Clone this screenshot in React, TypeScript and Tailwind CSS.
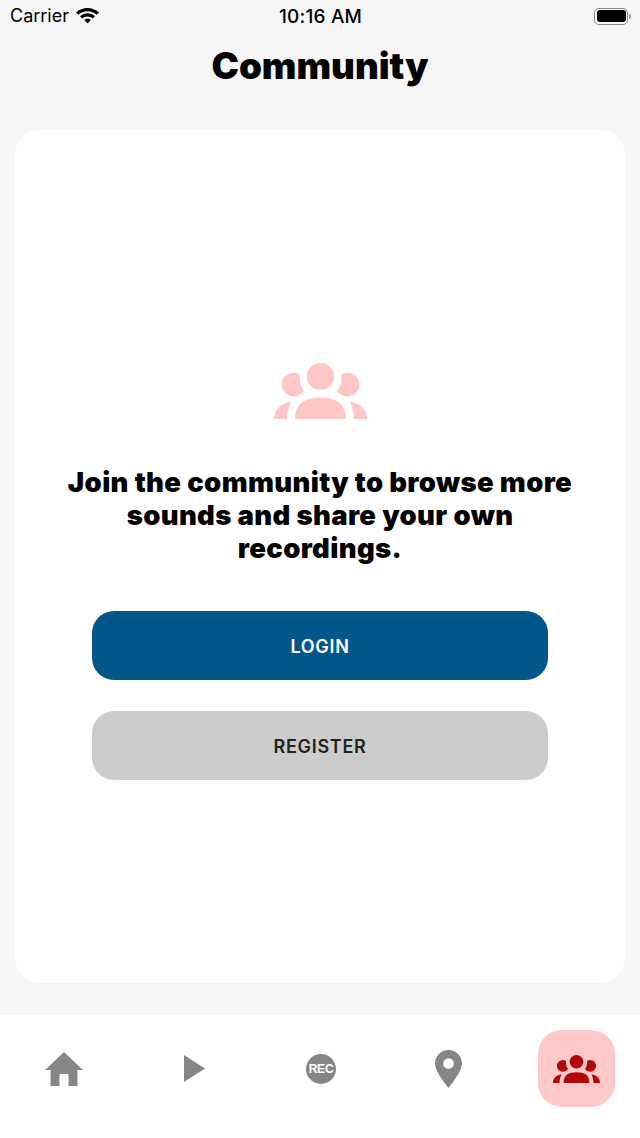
const Groups = ({ className, fill }: { className: string; fill: string }) => (
  <svg viewBox="69 37 279 171" preserveAspectRatio="none" className={className} fill={fill}>
    <mask id={"m" + fill.slice(1)}>
      <rect x="60" y="30" width="300" height="180" fill="#fff" />
      <circle cx="208.5" cy="84" r="63" fill="#000" />
    </mask>
    <circle cx="208.5" cy="78" r="41" />
    <g mask={"url(#m" + fill.slice(1) + ")"}>
      <circle cx="128" cy="103" r="36" />
      <circle cx="289" cy="103" r="36" />
    </g>
    <path d="M132 208C132 160 162 143 208.500 143C255 143 285 160 285 208Z" />
    <path d="M69 208C69 178 90 160 120 155C112 172 108 190 108 208Z" />
    <path d="M348 208C348 178 327 160 297 155C305 172 309 190 309 208Z" />
  </svg>
);

const NavItem = ({ children }: { children: React.ReactNode }) => (
  <div className="flex w-[77px] h-[77px] items-center justify-center">{children}</div>
);

export default function App() {
  return (
    <div className="flex h-[1138px] w-[640px] flex-col overflow-hidden bg-[#f6f6f6] font-['Inter',sans-serif] text-black">
      <div className="grid h-[32px] grid-cols-3 items-center pl-[10px] pr-[9px]">
        <div className="flex items-center gap-[7px]">
          <span className="text-[18px] leading-none">Carrier</span>
          <svg viewBox="0 0 24 18" className="h-[16px] w-[23px]" fill="#000" preserveAspectRatio="none">
            <path d="M12 0C7.500 0 3.500 1.800 0 5L2.400 7.600C5 5.100 8.300 3.700 12 3.700S19 5.100 21.600 7.600L24 5C20.500 1.800 16.500 0 12 0Z" />
            <path d="M12 6C9 6 6.300 7.200 4.200 9.200L6.600 11.700C8 10.400 9.900 9.600 12 9.600S16 10.400 17.400 11.700L19.800 9.200C17.700 7.200 15 6 12 6Z" />
            <path d="M12 12C10.700 12 9.500 12.500 8.600 13.400L12 17.500L15.400 13.400C14.500 12.500 13.300 12 12 12Z" />
          </svg>
        </div>
        <span className="text-center text-[19px] leading-none font-medium tracking-[0.2px]">10:16 AM</span>
        <div className="flex items-center justify-end gap-[1px]">
          <div className="flex h-[17px] w-[34px] items-center rounded-[5px] border-[1.5px] border-[#8a8a8a] p-[1.5px]">
            <div className="h-full w-full rounded-[3px] bg-black" />
          </div>
          <div className="h-[5px] w-[2px] rounded-r-full bg-[#9a9a9a]" />
        </div>
      </div>
      <div className="flex h-[98px] justify-center pt-[11px]">
        <h1 className="text-[36.7px] leading-[45px] font-black">Community</h1>
      </div>
      <div className="mx-[15px] flex h-[853px] flex-col items-center rounded-[24px] bg-white pt-[233px]">
        <Groups className="h-[56px] w-[93px]" fill="#ffc6c6" />
        <p className="mt-[47px] w-[520px] text-center text-[27.5px] leading-[33px] font-black tracking-[0.35px]">
          Join the community to browse more sounds and share your own recordings.
        </p>
        <button className="mt-[46px] flex h-[69px] w-[456px] items-center justify-center rounded-[22px] bg-[#03568a] pt-[2px] text-[18px] font-semibold tracking-[0.7px] text-white">
          LOGIN
        </button>
        <button className="mt-[31px] flex h-[69px] w-[456px] items-center justify-center rounded-[22px] bg-[#cccccc] pt-[2px] text-[18px] font-semibold tracking-[0.7px] text-[#222222]">
          REGISTER
        </button>
      </div>
      <div className="mt-[32px] flex h-[123px] items-start justify-between bg-white pl-[25px] pr-[25px] pt-[15px]">
        <NavItem>
          <svg viewBox="0 0 38 34" className="h-[34px] w-[38px]" fill="#868686">
            <path d="M19 0L38 18H32.500V34H23.500V22H14.500V34H5.500V18H0Z" />
          </svg>
        </NavItem>
        <NavItem>
          <svg viewBox="0 0 21 27" className="ml-[5px] h-[27px] w-[21px]" fill="#868686">
            <path d="M0 0L21 13.500L0 27Z" />
          </svg>
        </NavItem>
        <NavItem>
          <div className="ml-[2px] flex h-[30px] w-[30px] items-center justify-center rounded-full bg-[#868686] font-['Liberation_Sans',sans-serif] text-[12px] font-bold tracking-[-0.2px] text-white">
            REC
          </div>
        </NavItem>
        <NavItem>
          <svg viewBox="0 0 27 38" className="h-[38px] w-[27px]" fill="#868686">
            <path fillRule="evenodd" d="M13.500 0C6 0 0 6 0 13.500C0 22 13.500 38 13.500 38S27 22 27 13.500C27 6 21 0 13.500 0ZM13.500 8.200A5.300 5.300 0 1 1 13.500 18.800A5.300 5.300 0 1 1 13.500 8.200Z" />
          </svg>
        </NavItem>
        <div className="flex h-[77px] w-[77px] items-center justify-center rounded-[24px] bg-[#ffc9c9]">
          <Groups className="h-[28px] w-[47px]" fill="#b30606" />
        </div>
      </div>
    </div>
  );
}
